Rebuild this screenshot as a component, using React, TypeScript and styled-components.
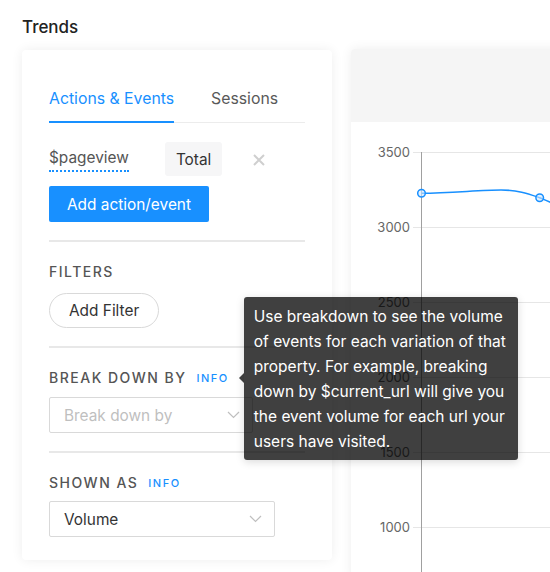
import * as React from 'react'
import styled, {createGlobalStyle} from 'styled-components'

const blue = '#1890ff'

const GlobalStyle = createGlobalStyle`
  html, body {
    margin: 0;
    padding: 0;
    background: #fff;
    overflow: hidden;
  }
  body {
    font-family: Inter, "Noto Sans", "Liberation Sans", sans-serif;
    color: #333;
    -webkit-font-smoothing: antialiased;
  }
`

const Page = styled.div`
  padding: 16px 0 0 22px;
  width: 1000px;
`

const Title = styled.h1`
  margin: 0 0 12px;
  font-size: 17px;
  line-height: 22px;
  font-weight: 500;
  color: #222;
`

const Columns = styled.div`
  display: flex;
  align-items: flex-start;
  gap: 19px;
`

const Card = styled.div`
  background: #fff;
  border-radius: 4px;
  box-shadow: 0 0 12px rgba(0, 0, 0, 0.07);
`

const SideCard = styled(Card)`
  position: relative;
  z-index: 2;
  width: 256px;
  flex-shrink: 0;
  padding: 24px 27px 23px;
`

const Tabs = styled.div`
  display: flex;
  border-bottom: 1px solid #ececec;
`

const Tab = styled.div<{$active?: boolean}>`
  padding: 13px 0 10px;
  margin-right: 37px;
  font-size: 15.8px;
  line-height: 24px;
  white-space: nowrap;
  color: ${p => (p.$active ? blue : '#595959')};
  border-bottom: 2px solid ${p => (p.$active ? blue : 'transparent')};
  margin-bottom: -1px;
`

const EventRow = styled.div`
  display: flex;
  align-items: center;
  margin-top: 19px;
  height: 34px;
`

const EventName = styled.span`
  font-size: 15.4px;
  line-height: 20px;
  color: #555;
  border-bottom: 2px dotted ${blue};
  padding-bottom: 2px;
  margin-top: 2px;
`

const MathBox = styled.div`
  margin-left: 36px;
  height: 34px;
  display: flex;
  align-items: center;
  padding: 0 11px;
  background: #f6f6f7;
  border-radius: 3px;
  font-size: 15.4px;
  color: #333;
`

const Remove = styled.svg`
  margin-left: 31px;
  margin-top: 2px;
`

const PrimaryButton = styled.button`
  margin-top: 10px;
  height: 36px;
  padding: 0 18px;
  border: 0;
  border-radius: 2px;
  background: ${blue};
  color: #fff;
  font-family: inherit;
  font-size: 15.4px;
`

const Divider = styled.hr`
  margin: 18px 0 0;
  border: 0;
  height: 2px;
  background: #e8e8e8;
`

const Label = styled.div<{$gap: number}>`
  margin: 20px 0 ${p => p.$gap}px;
  display: flex;
  align-items: center;
  white-space: nowrap;
  font-size: 14px;
  line-height: 20px;
  font-weight: 500;
  letter-spacing: 1.5px;
  color: #555;
`

const InfoWrap = styled.span`
  position: relative;
  margin-left: 10px;
  display: inline-flex;
`

const Info = styled.span`
  font-size: 11px;
  letter-spacing: 1.5px;
  color: ${blue};
`

const Tooltip = styled.div`
  position: absolute;
  left: calc(100% + 15px);
  top: -71px;
  width: 254px;
  padding: 7px 10px 6px;
  background: rgba(0, 0, 0, 0.75);
  border-radius: 3px;
  color: #fff;
  font-size: 15.5px;
  font-weight: 400;
  line-height: 25px;
  letter-spacing: 0;
  white-space: normal;
  box-shadow: 0 2px 8px rgba(0, 0, 0, 0.15);

  &::before {
    content: '';
    position: absolute;
    left: -5px;
    top: 76px;
    border: 5px solid transparent;
    border-left: 0;
    border-right-color: rgba(0, 0, 0, 0.75);
  }
`

const PillButton = styled.button`
  height: 35px;
  padding: 0 19px;
  border: 1px solid #d9d9d9;
  border-radius: 18px;
  background: #fff;
  color: #333;
  font-family: inherit;
  font-size: 15.4px;
`

const Select = styled.div<{$width: number; $placeholder?: boolean}>`
  box-sizing: border-box;
  width: ${p => p.$width}px;
  height: 36px;
  display: flex;
  align-items: center;
  justify-content: space-between;
  padding: 0 12px 0 14px;
  border: 1px solid #d9d9d9;
  border-radius: 2px;
  font-size: 15.4px;
  color: ${p => (p.$placeholder ? '#bfbfbf' : '#333')};
`

const ChartCard = styled(Card)`
  width: 620px;
  flex-shrink: 0;
  overflow: hidden;
  margin-top: -1px;
`

const ChartHeader = styled.div`
  height: 73px;
  background: #f5f5f5;
`

const ChartBody = styled.div`
  height: 460px;
`

const Chevron = () => (
  <svg width="13" height="8" viewBox="0 0 13 8">
    <path d="M1 1l5.5 5.5L12 1" fill="none" stroke="#bfbfbf" strokeWidth="1.2" />
  </svg>
)

const ticks = [3500, 3000, 2500, 2000, 1500, 1000]

const Chart = () => (
  <svg width="620" height="460" viewBox="0 0 620 460">
    {ticks.map((t, i) => {
      const y = 30.5 + i * 75
      return (
        <g key={t}>
          <line x1="62" x2="620" y1={y} y2={y} stroke="#e6e6e6" strokeWidth="1" />
          <text
            x="59"
            y={y + 4.5}
            textAnchor="end"
            fontSize="13"
            fill="#666"
            fontFamily="Inter, 'Liberation Sans', sans-serif"
          >
            {t}
          </text>
        </g>
      )
    })}
    <line x1="70.5" x2="70.5" y1="30" y2="460" stroke="#a0a0a0" strokeWidth="1" />
    <path
      d="M70.5 71.3 C 100 71, 130 68, 150 68 C 168 68, 178 72, 188.7 75.7 C 193 77.5, 196 79, 200 80.5"
      fill="none"
      stroke={blue}
      strokeWidth="1.5"
    />
    <circle cx="70.5" cy="71.3" r="3.8" fill="#cfe6ff" fillOpacity="0.6" stroke={blue} strokeWidth="1.5" />
    <circle cx="188.7" cy="75.7" r="3.8" fill="#cfe6ff" fillOpacity="0.6" stroke={blue} strokeWidth="1.5" />
  </svg>
)

export default function App() {
  return (
    <Page>
      <GlobalStyle />
      <Title>Trends</Title>
      <Columns>
        <SideCard>
          <Tabs>
            <Tab $active>Actions &amp; Events</Tab>
            <Tab>Sessions</Tab>
          </Tabs>
          <EventRow>
            <EventName>$pageview</EventName>
            <MathBox>Total</MathBox>
            <Remove width="12" height="12" viewBox="0 0 12 12">
              <path d="M1 1l10 10M11 1L1 11" stroke="#cfcfcf" strokeWidth="2" />
            </Remove>
          </EventRow>
          <PrimaryButton>Add action/event</PrimaryButton>
          <Divider />
          <Label $gap={11}>FILTERS</Label>
          <PillButton>Add Filter</PillButton>
          <Divider />
          <Label $gap={9}>
            BREAK DOWN BY
            <InfoWrap>
              <Info>INFO</Info>
              <Tooltip>
                Use breakdown to see the volume of events for each variation of that property. For
                example, breaking down by $current_url will give you the event volume for each url
                your users have visited.
              </Tooltip>
            </InfoWrap>
          </Label>
          <Select $width={204} $placeholder>
            Break down by
            <Chevron />
          </Select>
          <Divider />
          <Label $gap={8}>
            SHOWN AS
            <InfoWrap>
              <Info>INFO</Info>
            </InfoWrap>
          </Label>
          <Select $width={226}>
            Volume
            <Chevron />
          </Select>
        </SideCard>
        <ChartCard>
          <ChartHeader />
          <ChartBody>
            <Chart />
          </ChartBody>
        </ChartCard>
      </Columns>
    </Page>
  )
}
